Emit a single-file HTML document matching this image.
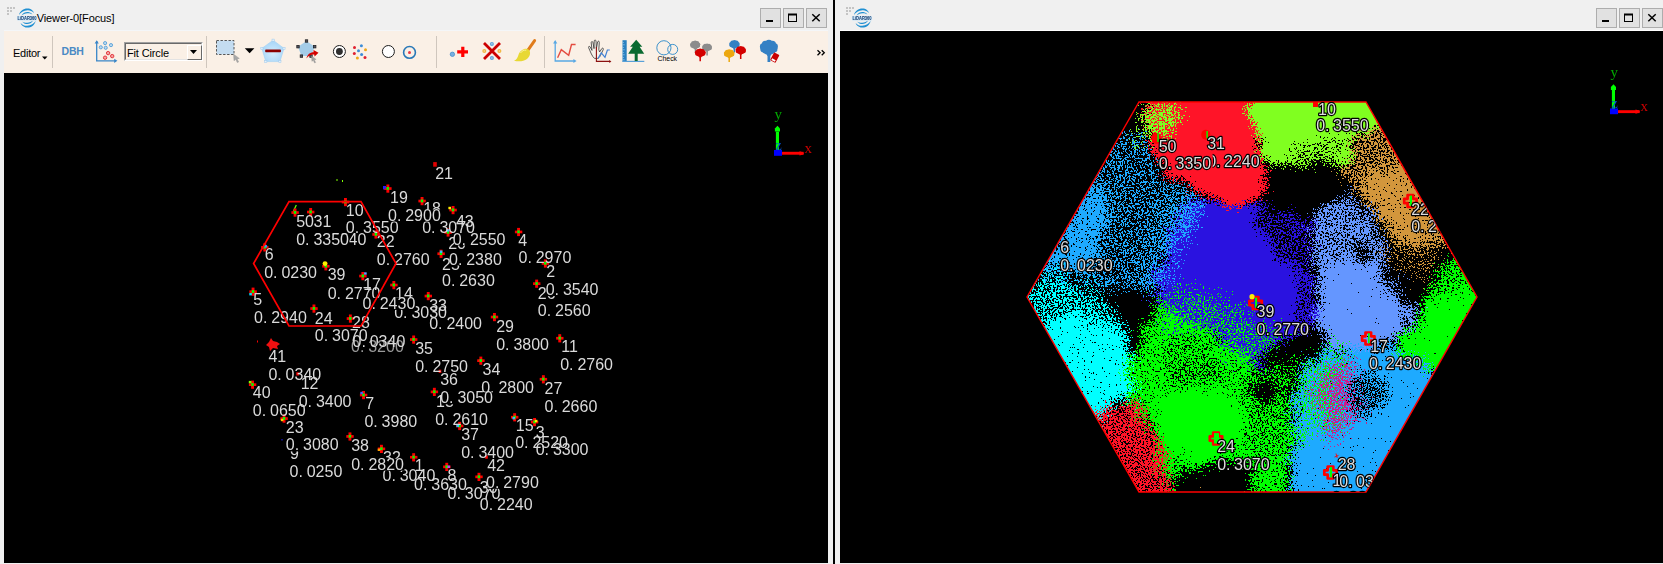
<!DOCTYPE html>
<html><head><meta charset="utf-8"><title>Viewer</title>
<style>
html,body{margin:0;padding:0}
body{width:1663px;height:564px;overflow:hidden;background:#f0f0f0;position:relative;font-family:"Liberation Sans",sans-serif}
.abs{position:absolute}
.btn{position:absolute;top:8px;width:19px;height:18px;background:#e1e1e1;border:1px solid #adadad}
.sep{position:absolute;top:36px;width:1px;height:32px;background:#cfc6bd}
svg{display:block;position:absolute;left:0;top:0;will-change:transform}
</style></head><body>
<div class="abs" style="left:4px;top:30px;width:824px;height:1px;background:#f4f6f8"></div>
<div class="abs" style="left:4px;top:31px;width:824px;height:42px;background:#faf0e6"></div>
<div class="abs" style="left:4px;top:73px;width:824px;height:490px;background:#000"></div>
<div class="abs" style="left:833px;top:0;width:2px;height:564px;background:#000"></div>
<div class="abs" style="left:840px;top:30px;width:823px;height:1px;background:#fff"></div>
<div class="abs" style="left:840px;top:31px;width:823px;height:532px;background:#000"></div>
<div class="abs" style="left:36.7px;top:11px;font-size:11px;line-height:14px;color:#000;letter-spacing:-0.1px;white-space:nowrap">Viewer-0[Focus]</div>
<div class="btn" style="left:760px"></div>
<div class="btn" style="left:783px"></div>
<div class="btn" style="left:806px"></div>
<div class="btn" style="left:1596px"></div>
<div class="btn" style="left:1619px"></div>
<div class="btn" style="left:1642px"></div>
<div class="abs" style="left:13px;top:47px;font-size:11px;line-height:13px;color:#000;letter-spacing:-0.25px">Editor</div>
<div class="abs" style="left:61.5px;top:44.5px;font-size:10.5px;line-height:13px;font-weight:bold;color:#4a8ac4;letter-spacing:-0.2px">DBH</div>
<div class="sep" style="left:52px"></div>
<div class="sep" style="left:206px"></div>
<div class="sep" style="left:436px"></div>
<div class="sep" style="left:544px"></div>
<div class="abs" style="left:124px;top:42px;width:79px;height:19px;box-sizing:border-box;border:1px solid;border-color:#a0a0a0 #fff #fff #a0a0a0;background:#faf0e6"><div style="position:absolute;left:0;top:0;right:0;bottom:0;border:1px solid;border-color:#696969 #e3e3e3 #e3e3e3 #696969"></div><div style="position:absolute;left:2px;top:3.5px;font-size:11px;line-height:13px;letter-spacing:-0.15px;color:#000;white-space:nowrap">Fit Circle</div><div style="position:absolute;left:62px;top:2px;width:15px;height:15px;box-sizing:border-box;background:#faf0e6;border:1px solid;border-color:#fff #696969 #696969 #fff"></div></div>
<div class="abs" style="left:657.5px;top:54.8px;font-size:6.9px;line-height:8px;color:#000;white-space:nowrap">Check</div>
<svg width="1663" height="564" viewBox="0 0 1663 564" style="pointer-events:none"><rect x="7" y="7" width="2" height="2" fill="#c4c4c4"/><rect x="10" y="7" width="2" height="2" fill="#c4c4c4"/><rect x="13" y="7" width="2" height="2" fill="#c4c4c4"/><rect x="7" y="10" width="2" height="2" fill="#c4c4c4"/><rect x="10" y="10" width="2" height="2" fill="#c4c4c4"/><rect x="7" y="13" width="2" height="2" fill="#c4c4c4"/><rect x="846" y="7" width="2" height="2" fill="#c4c4c4"/><rect x="849" y="7" width="2" height="2" fill="#c4c4c4"/><rect x="852" y="7" width="2" height="2" fill="#c4c4c4"/><rect x="846" y="10" width="2" height="2" fill="#c4c4c4"/><rect x="849" y="10" width="2" height="2" fill="#c4c4c4"/><rect x="846" y="13" width="2" height="2" fill="#c4c4c4"/><g fill="#2090d2" transform="translate(27 18)"><path d="M-8 -3 C-7 -8 -2 -10.4 2 -9.4 C5 -8.6 6.6 -6.6 7 -5 C5 -7.2 2.6 -8 0.4 -7.8 C-3.4 -7.4 -6.4 -5.6 -8 -3 z"/><path d="M-5.6 -2.6 C-4 -5.4 -1 -6.4 1.4 -6 C3.4 -5.6 4.8 -4.6 5.4 -3.4 C3.6 -4.6 2 -5 0.4 -4.8 C-2 -4.6 -4 -3.8 -5.6 -2.6 z"/><path d="M8.6 3 C7.6 8 2.6 10.4 -1.4 9.4 C-4.4 8.6 -6 6.6 -6.4 5 C-4.4 7.2 -2 8 0.2 7.8 C4 7.4 7 5.6 8.6 3 z"/><path d="M6.2 2.6 C4.6 5.4 1.6 6.4 -0.8 6 C-2.8 5.6 -4.2 4.6 -4.8 3.4 C-3 4.6 -1.4 5 0.2 4.8 C2.6 4.6 4.6 3.8 6.2 2.6 z"/></g><rect x="17" y="15.9" width="20" height="4.5" rx="1" fill="#c4e2f6"/><text x="17.5" y="19.9" font-family="Liberation Sans,sans-serif" font-weight="bold" font-size="4.6" fill="#1c3c6c" textLength="19" lengthAdjust="spacingAndGlyphs">LiDAR360</text><g fill="#2090d2" transform="translate(862 18)"><path d="M-8 -3 C-7 -8 -2 -10.4 2 -9.4 C5 -8.6 6.6 -6.6 7 -5 C5 -7.2 2.6 -8 0.4 -7.8 C-3.4 -7.4 -6.4 -5.6 -8 -3 z"/><path d="M-5.6 -2.6 C-4 -5.4 -1 -6.4 1.4 -6 C3.4 -5.6 4.8 -4.6 5.4 -3.4 C3.6 -4.6 2 -5 0.4 -4.8 C-2 -4.6 -4 -3.8 -5.6 -2.6 z"/><path d="M8.6 3 C7.6 8 2.6 10.4 -1.4 9.4 C-4.4 8.6 -6 6.6 -6.4 5 C-4.4 7.2 -2 8 0.2 7.8 C4 7.4 7 5.6 8.6 3 z"/><path d="M6.2 2.6 C4.6 5.4 1.6 6.4 -0.8 6 C-2.8 5.6 -4.2 4.6 -4.8 3.4 C-3 4.6 -1.4 5 0.2 4.8 C2.6 4.6 4.6 3.8 6.2 2.6 z"/></g><rect x="852" y="15.9" width="20" height="4.5" rx="1" fill="#c4e2f6"/><text x="852.5" y="19.9" font-family="Liberation Sans,sans-serif" font-weight="bold" font-size="4.6" fill="#1c3c6c" textLength="19" lengthAdjust="spacingAndGlyphs">LiDAR360</text><rect x="766" y="20" width="7" height="2" fill="#000"/><rect x="788.5" y="14.5" width="8" height="7" fill="none" stroke="#000" stroke-width="1"/><rect x="788" y="13.5" width="9" height="2" fill="#000"/><path d="M812.3 14.2 l7.4 7 M819.7 14.2 l-7.4 7" stroke="#000" stroke-width="1.5" fill="none"/><rect x="1602" y="20" width="7" height="2" fill="#000"/><rect x="1624.5" y="14.5" width="8" height="7" fill="none" stroke="#000" stroke-width="1"/><rect x="1624" y="13.5" width="9" height="2" fill="#000"/><path d="M1648.3 14.2 l7.4 7 M1655.7 14.2 l-7.4 7" stroke="#000" stroke-width="1.5" fill="none"/><path d="M42 56.5 h5.5 l-2.75 3 z" fill="#000"/><g fill="none" stroke="#3a86c8" stroke-width="1.3"><path d="M96.7 41 V60.8 H116"/></g><path d="M94.6 43.6 L96.7 40.2 L98.8 43.6 z M114.2 58.7 L117.4 60.8 L114.2 62.9 z" fill="#3a86c8"/><circle cx="105.1" cy="43.1" r="1.6" fill="#b8d8f0" stroke="#4a98d4" stroke-width="0.8"/><circle cx="111" cy="45.1" r="1.6" fill="#b8d8f0" stroke="#4a98d4" stroke-width="0.8"/><circle cx="100.8" cy="47.3" r="1.6" fill="#b8d8f0" stroke="#4a98d4" stroke-width="0.8"/><circle cx="105.7" cy="47.8" r="1.6" fill="#b8d8f0" stroke="#4a98d4" stroke-width="0.8"/><circle cx="108.1" cy="53.1" r="1.7" fill="#f4a0a0" stroke="#e02830" stroke-width="0.9"/><circle cx="112.2" cy="56.1" r="1.7" fill="#f4a0a0" stroke="#e02830" stroke-width="0.9"/><circle cx="105.1" cy="57.7" r="1.7" fill="#f4a0a0" stroke="#e02830" stroke-width="0.9"/><path d="M190 50 h7 l-3.5 4 z" fill="#000"/><rect x="216.5" y="40.5" width="17.5" height="14" fill="#c4dcf0" stroke="#555" stroke-width="1" stroke-dasharray="2.4 1.6"/><path d="M233.6 54.2 l0.4 6.6 l1.7 -1.6 l1.6 3.4 l1.3 -0.6 l-1.6 -3.3 l2.3 -0.3 z" fill="#a8a8a8" stroke="#8a8a8a" stroke-width="0.4"/><path d="M244.8 48.2 h9.6 l-4.8 5 z" fill="#000"/><defs><radialGradient id="pg" cx="0.5" cy="0.6" r="0.6"><stop offset="0" stop-color="#d4ecfc"/><stop offset="1" stop-color="#a4d4f8"/></radialGradient></defs><polygon points="273.1,40.2 284,48.4 279.9,61.6 265.8,61.6 261.9,48.4" fill="url(#pg)" stroke="#a0d0f4" stroke-width="0.6"/><rect x="272.0" y="39.1" width="2.2" height="2.2" fill="#e4f0fa" stroke="#9cc8ec" stroke-width="0.5"/><rect x="282.9" y="47.3" width="2.2" height="2.2" fill="#e4f0fa" stroke="#9cc8ec" stroke-width="0.5"/><rect x="278.79999999999995" y="60.5" width="2.2" height="2.2" fill="#e4f0fa" stroke="#9cc8ec" stroke-width="0.5"/><rect x="264.7" y="60.5" width="2.2" height="2.2" fill="#e4f0fa" stroke="#9cc8ec" stroke-width="0.5"/><rect x="260.79999999999995" y="47.3" width="2.2" height="2.2" fill="#e4f0fa" stroke="#9cc8ec" stroke-width="0.5"/><rect x="265.2" y="49.4" width="15.7" height="2.8" rx="0.6" fill="#8b0000"/><polygon points="306.5,41 314.7,46.7 311,56.1 301.4,56.1 298,46.7" fill="#a4cce8"/><rect x="305.3" y="39.8" width="2.4" height="2.4" fill="#556" stroke="#222" stroke-width="0.8"/><rect x="313.5" y="45.5" width="2.4" height="2.4" fill="#556" stroke="#222" stroke-width="0.8"/><rect x="309.8" y="54.9" width="2.4" height="2.4" fill="#556" stroke="#222" stroke-width="0.8"/><rect x="300.2" y="54.9" width="2.4" height="2.4" fill="#556" stroke="#222" stroke-width="0.8"/><rect x="296.8" y="45.5" width="2.4" height="2.4" fill="#556" stroke="#222" stroke-width="0.8"/><path d="M306.4 58.4 C307.5 54.5 310 52.3 313.5 52.3 L313.5 50 L318.5 52.8 L314.6 56.6 L314.2 54.6 C311 54.4 308.5 55.6 306.4 58.4 z" fill="#d40000"/><path d="M311.4 55.8 l0.5 5.6 l1.3 -1.2 l1.4 2.8 l1.1 -0.5 l-1.4 -2.8 l1.9 -0.3 z" fill="#a0a0a0" stroke="#888" stroke-width="0.3"/><circle cx="339.4" cy="51.5" r="6" fill="#fff" stroke="#1c1c1c" stroke-width="1"/><circle cx="339.4" cy="51.5" r="3.4" fill="#2e2e2e"/><circle cx="354.5" cy="47.5" r="1.5" fill="#e02030"/><circle cx="361.4" cy="45.7" r="1.5" fill="#3c8cd8"/><circle cx="365.5" cy="49.7" r="1.5" fill="#f0a818"/><circle cx="358.5" cy="50.8" r="1.5" fill="#3c8cd8"/><circle cx="354.3" cy="53.4" r="1.5" fill="#e02030"/><circle cx="361.6" cy="54.5" r="1.5" fill="#3c8cd8"/><circle cx="357.4" cy="57.9" r="1.5" fill="#f0a818"/><circle cx="365" cy="57.6" r="1.5" fill="#e02030"/><circle cx="388.4" cy="51.5" r="6" fill="#fff" stroke="#1c1c1c" stroke-width="1"/><circle cx="409.5" cy="52.4" r="5.9" fill="none" stroke="#2878b8" stroke-width="1.6"/><circle cx="409.5" cy="52.4" r="1.5" fill="#e83848"/><circle cx="452.4" cy="54.3" r="2.2" fill="#78b0e0" stroke="#3c88c8" stroke-width="0.7"/><path d="M457.2 50.2 h4 v-3.5 h3.2 v3.5 h3.6 v3.2 h-3.6 v3.6 h-3.2 v-3.6 h-4 z" fill="#ff0000"/><circle cx="491.9" cy="43.9" r="2" fill="#4c98d8" opacity="0.9"/><circle cx="491.9" cy="43.9" r="0.8" fill="#faf0e6" opacity="0.6"/><circle cx="491.9" cy="58.1" r="2" fill="#4c98d8" opacity="0.9"/><circle cx="491.9" cy="58.1" r="0.8" fill="#faf0e6" opacity="0.6"/><circle cx="484.3" cy="51" r="2" fill="#f0b030" opacity="0.9"/><circle cx="484.3" cy="51" r="0.8" fill="#faf0e6" opacity="0.6"/><circle cx="499.4" cy="51" r="2" fill="#f0b030" opacity="0.9"/><circle cx="499.4" cy="51" r="0.8" fill="#faf0e6" opacity="0.6"/><path d="M484 43 L500 59 M500 43 L484 59" stroke="#cc0000" stroke-width="2.8" fill="none"/><path d="M534.6 40.6 L527.6 50.6" stroke="#e07c1c" stroke-width="3" stroke-linecap="round" fill="none"/><path d="M528.5 49.5 C531 51.5 530.5 56 527 59 C523.5 61.8 518 61.6 514 60.8 C517 59.6 517.6 57 518.6 54.4 C520 50.6 525 47.4 528.5 49.5 z" fill="#e8d834"/><path d="M520.5 53 C521.8 50.8 524.2 49.8 526.2 50.2" stroke="#fbf4a8" stroke-width="0.9" fill="none"/><g fill="none" stroke="#58a8e4" stroke-width="1.3"><path d="M555.2 41.5 V61 H575"/></g><path d="M553.1 43.4 L555.2 40 L557.3 43.4 z M573.4 58.9 L576.6 61 L573.4 63.1 z" fill="#58a8e4"/><path d="M557.6 57.7 L561.3 49.6 L568.7 55.3 L571.5 44.5 L575.6 44.5" stroke="#e44c40" stroke-width="1.4" fill="none"/><path d="M594.5 58.4 C592 56.5 590.6 52 588.6 47.6 C588.2 46.2 589.6 45.8 590.2 47 L592 50.4 L591.2 42.6 C591.2 41.2 592.8 41.2 593 42.6 L594 48.6 L594.2 41 C594.3 39.7 595.9 39.7 596 41 L596.4 48.4 L597.6 42 C597.9 40.7 599.4 41 599.3 42.3 L598.8 49.6 L599.6 52 L601.8 48.6 C602.6 47.6 603.8 48.4 603.3 49.5 L600.4 55.6 C599.8 57 598.8 58 597.6 58.4 z" fill="#f6f2ea" stroke="#333" stroke-width="0.8" stroke-linejoin="round"/><path d="M596.4 47 V61.4 H610" stroke="#8b1010" stroke-width="1.1" fill="none"/><path d="M609.3 59.9 L611.4 61.4 L609.3 62.9 z" fill="#8b1010"/><path d="M598 58.5 L601.3 52.8 L605 57.3 L607.4 50 L609.8 50" stroke="#4080d4" stroke-width="1.2" fill="none"/><rect x="622.5" y="40.2" width="4.2" height="21.6" fill="#2a80c0"/><rect x="622.5" y="42.0" width="1.4" height="0.7" fill="#9cc8ec"/><rect x="622.5" y="44.5" width="2.2" height="0.7" fill="#9cc8ec"/><rect x="622.5" y="47.0" width="1.4" height="0.7" fill="#9cc8ec"/><rect x="622.5" y="49.5" width="2.2" height="0.7" fill="#9cc8ec"/><rect x="622.5" y="52.0" width="1.4" height="0.7" fill="#9cc8ec"/><rect x="622.5" y="54.5" width="2.2" height="0.7" fill="#9cc8ec"/><rect x="622.5" y="57.0" width="1.4" height="0.7" fill="#9cc8ec"/><rect x="622.5" y="59.5" width="2.2" height="0.7" fill="#9cc8ec"/><rect x="622.5" y="60.8" width="21.8" height="1.2" fill="#58a0d8"/><path d="M636.2 39.8 L642.3 46.7 L639.6 46.7 L644.2 53.7 L637.7 53.7 L637.7 61 L634.7 61 L634.7 53.7 L628.2 53.7 L632.8 46.7 L630.1 46.7 z" fill="#0a6a30"/><circle cx="663.9" cy="47.8" r="7.1" fill="none" stroke="#2888c8" stroke-width="0.9"/><circle cx="672.7" cy="49.4" r="5" fill="none" stroke="#2888c8" stroke-width="0.9"/><g fill="#8c8c8c"><ellipse cx="695.20" cy="45.34" rx="4.69" ry="3.56"/><circle cx="691.94" cy="44.32" r="1.84"/><circle cx="693.21" cy="43.12" r="2.02"/><circle cx="695.20" cy="42.66" r="2.11"/><circle cx="697.19" cy="43.12" r="2.02"/><circle cx="698.46" cy="44.32" r="1.84"/><circle cx="698.46" cy="46.03" r="1.56"/><circle cx="691.94" cy="46.03" r="1.56"/><path d="M693.46 47.44 L697.54 47.44 L696.25 49.87 L696.25 52.4 L694.75 52.4 L694.75 49.87 z"/></g><g fill="#8c8c8c"><ellipse cx="707.05" cy="47.78" rx="4.55" ry="3.12"/><circle cx="703.89" cy="46.88" r="1.78"/><circle cx="705.12" cy="45.83" r="1.96"/><circle cx="707.05" cy="45.43" r="2.05"/><circle cx="708.98" cy="45.83" r="1.96"/><circle cx="710.21" cy="46.88" r="1.78"/><circle cx="710.21" cy="48.39" r="1.51"/><circle cx="703.89" cy="48.39" r="1.51"/><path d="M705.12 49.62 L709.08 49.62 L707.85 51.75 L707.85 55.5 L706.35 55.5 L706.35 51.75 z"/></g><g fill="#d40000"><ellipse cx="700.30" cy="53.27" rx="4.97" ry="3.43"/><circle cx="696.85" cy="52.28" r="1.94"/><circle cx="698.19" cy="51.13" r="2.14"/><circle cx="700.30" cy="50.69" r="2.24"/><circle cx="702.41" cy="51.13" r="2.14"/><circle cx="703.75" cy="52.28" r="1.94"/><circle cx="703.75" cy="53.94" r="1.65"/><circle cx="696.85" cy="53.94" r="1.65"/><path d="M698.04 55.30 L702.36 55.30 L700.95 57.64 L700.95 61.3 L699.45 61.3 L699.45 57.64 z"/></g><g fill="#3480c4"><ellipse cx="734.45" cy="44.81" rx="4.83" ry="3.39"/><circle cx="731.10" cy="43.84" r="1.89"/><circle cx="732.40" cy="42.70" r="2.08"/><circle cx="734.45" cy="42.27" r="2.17"/><circle cx="736.50" cy="42.70" r="2.08"/><circle cx="737.80" cy="43.84" r="1.89"/><circle cx="737.80" cy="45.47" r="1.61"/><circle cx="731.10" cy="45.47" r="1.61"/><path d="M732.20 46.81 L736.40 46.81 L735.05 49.12 L735.05 52.6 L733.55 52.6 L733.55 49.12 z"/></g><g fill="#d40000"><ellipse cx="740.75" cy="50.81" rx="4.83" ry="3.39"/><circle cx="737.40" cy="49.84" r="1.89"/><circle cx="738.70" cy="48.70" r="2.08"/><circle cx="740.75" cy="48.27" r="2.17"/><circle cx="742.80" cy="48.70" r="2.08"/><circle cx="744.10" cy="49.84" r="1.89"/><circle cx="744.10" cy="51.47" r="1.61"/><circle cx="737.40" cy="51.47" r="1.61"/><path d="M738.60 52.81 L742.80 52.81 L741.45 55.12 L741.45 58.9 L739.95 58.9 L739.95 55.12 z"/></g><g fill="#eca810"><ellipse cx="729.20" cy="54.06" rx="4.97" ry="3.34"/><circle cx="725.75" cy="53.10" r="1.94"/><circle cx="727.09" cy="51.97" r="2.14"/><circle cx="729.20" cy="51.55" r="2.24"/><circle cx="731.31" cy="51.97" r="2.14"/><circle cx="732.65" cy="53.10" r="1.94"/><circle cx="732.65" cy="54.71" r="1.65"/><circle cx="725.75" cy="54.71" r="1.65"/><path d="M727.04 56.03 L731.36 56.03 L729.95 58.31 L729.95 61.9 L728.45 61.9 L728.45 58.31 z"/></g><g fill="#3480c4"><ellipse cx="768.90" cy="48.26" rx="8.28" ry="6.34"/><circle cx="763.15" cy="46.45" r="3.24"/><circle cx="765.39" cy="44.32" r="3.56"/><circle cx="768.90" cy="43.51" r="3.73"/><circle cx="772.41" cy="44.32" r="3.56"/><circle cx="774.65" cy="46.45" r="3.24"/><circle cx="774.65" cy="49.50" r="2.75"/><circle cx="763.15" cy="49.50" r="2.75"/><path d="M765.30 52.01 L772.50 52.01 L770.30 56.33 L770.30 61.9 L767.50 61.9 L767.50 56.33 z"/></g><g transform="translate(774.8 57.6) rotate(28)"><rect x="-3" y="-4.4" width="6" height="8.8" rx="0.8" fill="#c80000"/><rect x="-2" y="1.8" width="4" height="1.9" fill="#fff"/></g><path d="M817.5 50.3 l2.6 2.5 l-2.6 2.5 M821.7 50.3 l2.6 2.5 l-2.6 2.5" stroke="#000" stroke-width="1.3" fill="none"/></svg>
<svg width="1663" height="564" viewBox="0 0 1663 564" style="pointer-events:none"><clipPath id="lc"><rect x="4" y="73" width="824" height="490"/></clipPath><g clip-path="url(#lc)"><rect x="336" y="179.5" width="2" height="1" fill="#80ff00"/><rect x="342" y="180" width="1" height="2" fill="#80ff00"/><path d="M293.5 211 l2.8 -6" stroke="#60ff00" stroke-width="1.3" fill="none"/><rect x="383" y="186" width="3" height="3.5" fill="#2020ff"/><path d="M266 345 l3 -3 l2 -4 l2 3 l4 1 l3 2 l-3 2 l1 3 l-5 -1 l-3 3 l-1 -4 z" fill="#f01010"/><rect x="257" y="340.5" width="1" height="2" fill="#f00"/><rect x="281.5" y="439" width="1" height="1.5" fill="#2020ff"/><rect x="289" y="444" width="1" height="1" fill="#2020ff"/><rect x="308" y="446" width="1.5" height="1.5" fill="#2020ff"/><rect x="433.2" y="162.1" width="3.6" height="4.6" fill="#e00000"/><rect x="384.2" y="187.2" width="7.4" height="2.7" fill="#f00"/><rect x="386.4" y="184.5" width="2.9" height="8.2" fill="#f00"/><rect x="386.6" y="187.0" width="2.4" height="2.8" fill="#0f0"/><rect x="383.2" y="186.3" width="2.6" height="2.4" fill="#2020ff"/><rect x="418.4" y="199.7" width="7.4" height="2.7" fill="#f00"/><rect x="420.6" y="197.0" width="2.9" height="8.2" fill="#f00"/><rect x="420.8" y="199.5" width="2.4" height="2.8" fill="#0f0"/><rect x="449.4" y="208.7" width="7.4" height="2.7" fill="#f00"/><rect x="451.6" y="206.0" width="2.9" height="8.2" fill="#f00"/><rect x="451.8" y="208.5" width="2.4" height="2.8" fill="#0f0"/><rect x="448.4" y="206.8" width="2.6" height="2.4" fill="#ffee00"/><rect x="341.8" y="200.7" width="7.4" height="2.7" fill="#f00"/><rect x="344.0" y="198.0" width="2.9" height="8.2" fill="#f00"/><rect x="344.2" y="200.5" width="2.4" height="2.8" fill="#0f0"/><rect x="291.4" y="211.2" width="7.4" height="2.7" fill="#f00"/><rect x="293.6" y="208.5" width="2.9" height="8.2" fill="#f00"/><rect x="293.8" y="211.0" width="2.4" height="2.8" fill="#0f0"/><rect x="307.0" y="210.7" width="7.4" height="2.7" fill="#f00"/><rect x="309.2" y="208.0" width="2.9" height="8.2" fill="#f00"/><rect x="309.4" y="210.5" width="2.4" height="2.8" fill="#0f0"/><rect x="372.3" y="233.1" width="7.4" height="2.7" fill="#f00"/><rect x="374.5" y="230.4" width="2.9" height="8.2" fill="#f00"/><rect x="374.7" y="232.9" width="2.4" height="2.8" fill="#0f0"/><rect x="444.4" y="231.1" width="7.4" height="2.7" fill="#f00"/><rect x="446.6" y="228.4" width="2.9" height="8.2" fill="#f00"/><rect x="446.8" y="230.9" width="2.4" height="2.8" fill="#0f0"/><rect x="446.8" y="229.2" width="2.6" height="2.4" fill="#30c0ff"/><rect x="437.4" y="252.4" width="7.4" height="2.7" fill="#f00"/><rect x="439.6" y="249.7" width="2.9" height="8.2" fill="#f00"/><rect x="439.8" y="252.2" width="2.4" height="2.8" fill="#0f0"/><rect x="439.8" y="250.5" width="2.6" height="2.4" fill="#30c0ff"/><rect x="514.9" y="230.6" width="7.4" height="2.7" fill="#f00"/><rect x="517.1" y="227.9" width="2.9" height="8.2" fill="#f00"/><rect x="517.3" y="230.4" width="2.4" height="2.8" fill="#0f0"/><rect x="541.7" y="262.1" width="7.4" height="2.7" fill="#f00"/><rect x="543.9" y="259.4" width="2.9" height="8.2" fill="#f00"/><rect x="544.1" y="261.9" width="2.4" height="2.8" fill="#0f0"/><rect x="533.0" y="282.3" width="7.4" height="2.7" fill="#f00"/><rect x="535.2" y="279.6" width="2.9" height="8.2" fill="#f00"/><rect x="535.4" y="282.1" width="2.4" height="2.8" fill="#0f0"/><rect x="261.1" y="246.0" width="7.4" height="2.7" fill="#f00"/><rect x="263.3" y="243.3" width="2.9" height="8.2" fill="#f00"/><rect x="263.5" y="245.8" width="2.4" height="2.8" fill="#0f0"/><rect x="264.5" y="245.1" width="2.6" height="2.4" fill="#30a0ff"/><rect x="322.2" y="264.9" width="7.4" height="2.7" fill="#f00"/><rect x="324.4" y="262.2" width="2.9" height="8.2" fill="#f00"/><rect x="324.6" y="264.7" width="2.4" height="2.8" fill="#0f0"/><rect x="359.2" y="274.7" width="7.4" height="2.7" fill="#f00"/><rect x="361.4" y="272.0" width="2.9" height="8.2" fill="#f00"/><rect x="361.6" y="274.5" width="2.4" height="2.8" fill="#0f0"/><rect x="364.1" y="272.3" width="2.6" height="2.4" fill="#60a0ff"/><rect x="390.2" y="283.7" width="7.4" height="2.7" fill="#f00"/><rect x="392.4" y="281.0" width="2.9" height="8.2" fill="#f00"/><rect x="392.6" y="283.5" width="2.4" height="2.8" fill="#0f0"/><rect x="424.6" y="294.7" width="7.4" height="2.7" fill="#f00"/><rect x="426.8" y="292.0" width="2.9" height="8.2" fill="#f00"/><rect x="427.0" y="294.5" width="2.4" height="2.8" fill="#0f0"/><rect x="249.4" y="290.3" width="7.4" height="2.7" fill="#f00"/><rect x="251.6" y="287.6" width="2.9" height="8.2" fill="#f00"/><rect x="251.8" y="290.1" width="2.4" height="2.8" fill="#0f0"/><rect x="249.3" y="293.0" width="2.6" height="2.4" fill="#00e0ff"/><rect x="310.3" y="307.2" width="7.4" height="2.7" fill="#f00"/><rect x="312.5" y="304.5" width="2.9" height="8.2" fill="#f00"/><rect x="312.7" y="307.0" width="2.4" height="2.8" fill="#0f0"/><rect x="346.7" y="317.2" width="7.4" height="2.7" fill="#f00"/><rect x="348.9" y="314.5" width="2.9" height="8.2" fill="#f00"/><rect x="349.1" y="317.0" width="2.4" height="2.8" fill="#0f0"/><rect x="490.8" y="315.7" width="7.4" height="2.7" fill="#f00"/><rect x="493.0" y="313.0" width="2.9" height="8.2" fill="#f00"/><rect x="493.2" y="315.5" width="2.4" height="2.8" fill="#0f0"/><rect x="556.1" y="336.9" width="7.4" height="2.7" fill="#f00"/><rect x="558.3" y="334.2" width="2.9" height="8.2" fill="#f00"/><rect x="558.5" y="336.7" width="2.4" height="2.8" fill="#0f0"/><rect x="410.0" y="338.2" width="7.4" height="2.7" fill="#f00"/><rect x="412.2" y="335.5" width="2.9" height="8.2" fill="#f00"/><rect x="412.4" y="338.0" width="2.4" height="2.8" fill="#0f0"/><rect x="477.2" y="359.3" width="7.4" height="2.7" fill="#f00"/><rect x="479.4" y="356.6" width="2.9" height="8.2" fill="#f00"/><rect x="479.6" y="359.1" width="2.4" height="2.8" fill="#0f0"/><rect x="438.7" y="369.7" width="2.6" height="3.2" fill="#f00"/><rect x="539.7" y="377.9" width="7.4" height="2.7" fill="#f00"/><rect x="541.9" y="375.2" width="2.9" height="8.2" fill="#f00"/><rect x="542.1" y="377.7" width="2.4" height="2.8" fill="#0f0"/><rect x="430.7" y="390.5" width="7.4" height="2.7" fill="#f00"/><rect x="432.9" y="387.8" width="2.9" height="8.2" fill="#f00"/><rect x="433.1" y="390.3" width="2.4" height="2.8" fill="#0f0"/><rect x="296.3" y="372.3" width="2.6" height="3.2" fill="#f00"/><rect x="248.9" y="383.3" width="7.4" height="2.7" fill="#f00"/><rect x="251.1" y="380.6" width="2.9" height="8.2" fill="#f00"/><rect x="251.3" y="383.1" width="2.4" height="2.8" fill="#0f0"/><rect x="248.8" y="380.9" width="2.6" height="2.4" fill="#80ff00"/><rect x="359.9" y="393.7" width="7.4" height="2.7" fill="#f00"/><rect x="362.1" y="391.0" width="2.9" height="8.2" fill="#f00"/><rect x="362.3" y="393.5" width="2.4" height="2.8" fill="#0f0"/><rect x="360.3" y="391.8" width="2.6" height="2.4" fill="#4060ff"/><rect x="280.4" y="417.2" width="7.4" height="2.7" fill="#f00"/><rect x="282.6" y="414.5" width="2.9" height="8.2" fill="#f00"/><rect x="282.8" y="417.0" width="2.4" height="2.8" fill="#0f0"/><rect x="280.8" y="418.8" width="2.6" height="2.4" fill="#ffcc00"/><rect x="346.3" y="435.1" width="7.4" height="2.7" fill="#f00"/><rect x="348.5" y="432.4" width="2.9" height="8.2" fill="#f00"/><rect x="348.7" y="434.9" width="2.4" height="2.8" fill="#0f0"/><rect x="377.8" y="447.5" width="7.4" height="2.7" fill="#f00"/><rect x="380.0" y="444.8" width="2.9" height="8.2" fill="#f00"/><rect x="380.2" y="447.3" width="2.4" height="2.8" fill="#0f0"/><rect x="377.7" y="448.6" width="2.6" height="2.4" fill="#ffa000"/><rect x="410.0" y="455.9" width="7.4" height="2.7" fill="#f00"/><rect x="412.2" y="453.2" width="2.9" height="8.2" fill="#f00"/><rect x="412.4" y="455.7" width="2.4" height="2.8" fill="#0f0"/><rect x="456.0" y="424.6" width="7.4" height="2.7" fill="#f00"/><rect x="458.2" y="421.9" width="2.9" height="8.2" fill="#f00"/><rect x="458.4" y="424.4" width="2.4" height="2.8" fill="#0f0"/><rect x="456.4" y="424.7" width="2.6" height="2.4" fill="#30c0ff"/><rect x="511.0" y="415.9" width="7.4" height="2.7" fill="#f00"/><rect x="513.2" y="413.2" width="2.9" height="8.2" fill="#f00"/><rect x="513.4" y="415.7" width="2.4" height="2.8" fill="#0f0"/><rect x="512.4" y="417.0" width="2.6" height="2.4" fill="#30c0ff"/><rect x="530.9" y="420.7" width="7.4" height="2.7" fill="#f00"/><rect x="533.1" y="418.0" width="2.9" height="8.2" fill="#f00"/><rect x="533.3" y="420.5" width="2.4" height="2.8" fill="#0f0"/><rect x="534.8" y="419.8" width="2.6" height="2.4" fill="#ffee00"/><rect x="485.2" y="455.5" width="2.6" height="3.2" fill="#f00"/><rect x="443.1" y="465.5" width="7.4" height="2.7" fill="#f00"/><rect x="445.3" y="462.8" width="2.9" height="8.2" fill="#f00"/><rect x="445.5" y="465.3" width="2.4" height="2.8" fill="#0f0"/><rect x="447.5" y="465.6" width="2.6" height="2.4" fill="#c040ff"/><rect x="475.3" y="475.5" width="7.4" height="2.7" fill="#f00"/><rect x="477.5" y="472.8" width="2.9" height="8.2" fill="#f00"/><rect x="477.7" y="475.3" width="2.4" height="2.8" fill="#0f0"/><circle cx="325" cy="263.6" r="2.4" fill="#ffee00"/><g font-family="Liberation Sans,sans-serif" font-size="16" fill="#dadada" word-spacing="-0.6"><text x="351" y="352.3" fill="#9a9a9a">0. 3200</text><text x="435.2" y="178.9">21</text><text x="390.0" y="203.2">19</text><text x="423.2" y="214.1">18</text><text x="422.2" y="233.0">0. 3070</text><text x="455.9" y="226.5">43</text><text x="345.8" y="215.5">10</text><text x="345.8" y="233.0">0. 3550</text><text x="296.2" y="227.3">50</text><text x="313.6" y="227.3">31</text><text x="313.6" y="245.4">0. 2240</text><text x="376.8" y="247.1">22</text><text x="376.8" y="265.2">0. 2760</text><text x="448.2" y="248.5">20</text><text x="442.0" y="269.5">25</text><text x="442.0" y="285.8">0. 2630</text><text x="518.2" y="245.9">4</text><text x="518.5" y="263.2">0. 2970</text><text x="546.2" y="276.9">2</text><text x="537.8" y="298.9">26</text><text x="537.8" y="315.7">0. 2560</text><text x="264.7" y="260.3">6</text><text x="264.2" y="277.5">0. 0230</text><text x="327.7" y="280.1">39</text><text x="327.7" y="298.5">0. 2770</text><text x="363.2" y="289.5">17</text><text x="395.0" y="298.9">14</text><text x="394.2" y="317.5">0. 3030</text><text x="429.2" y="310.8">33</text><text x="429.2" y="329.1">0. 2400</text><text x="253.2" y="304.5">5</text><text x="254.0" y="322.5">0. 2940</text><text x="314.8" y="323.8">24</text><text x="314.8" y="340.6">0. 3070</text><text x="352.0" y="328.2">28</text><text x="352.5" y="346.5">0. 0340</text><text x="496.2" y="332.4">29</text><text x="496.2" y="349.7">0. 3800</text><text x="561.2" y="352.2">11</text><text x="560.2" y="369.5">0. 2760</text><text x="415.2" y="353.5">35</text><text x="415.2" y="372.3">0. 2750</text><text x="482.5" y="375.3">34</text><text x="481.2" y="392.7">0. 2800</text><text x="440.2" y="385.2">36</text><text x="544.5" y="393.7">27</text><text x="544.5" y="411.8">0. 2660</text><text x="436.0" y="406.8">13</text><text x="435.2" y="425.0">0. 2610</text><text x="268.4" y="362.2">41</text><text x="268.4" y="380.3">0. 0340</text><text x="300.7" y="389.0">12</text><text x="298.7" y="406.5">0. 3400</text><text x="252.8" y="398.2">40</text><text x="252.8" y="415.9">0. 0650</text><text x="365.2" y="408.5">7</text><text x="364.4" y="427.1">0. 3980</text><text x="285.8" y="432.5">23</text><text x="290.0" y="459.2">9</text><text x="289.5" y="477.2">0. 0250</text><text x="351.2" y="451.1">38</text><text x="383.0" y="463.0">32</text><text x="382.5" y="481.4">0. 3040</text><text x="414.8" y="471.0">1</text><text x="414.1" y="490.0">0. 3630</text><text x="461.2" y="439.9">37</text><text x="461.2" y="457.8">0. 3400</text><text x="515.8" y="430.7">15</text><text x="515.2" y="448.1">0. 2520</text><text x="535.7" y="437.5">3</text><text x="535.7" y="454.8">0. 3300</text><text x="487.2" y="470.9">42</text><text x="447.6" y="480.8">8</text><text x="447.6" y="498.7">0. 3070</text><text x="479.8" y="493.2">30</text><text x="479.8" y="510.1">0. 2240</text><rect x="389.3" y="209.5" width="52" height="12" fill="#000"/><text x="388.0" y="220.5">0. 2900</text><rect x="454.0" y="233.5" width="52" height="12" fill="#000"/><text x="452.7" y="244.5">0. 2550</text><rect x="297.5" y="234.4" width="52" height="12" fill="#000"/><text x="296.2" y="245.4">0. 3350</text><rect x="450.3" y="253.5" width="52" height="12" fill="#000"/><text x="449.0" y="264.5">0. 2380</text><rect x="547.0" y="284.1" width="52" height="12" fill="#000"/><text x="545.7" y="295.1">0. 3540</text><rect x="363.8" y="297.9" width="52" height="12" fill="#000"/><text x="362.5" y="308.9">0. 2430</text><rect x="441.5" y="392.3" width="52" height="12" fill="#000"/><text x="440.2" y="403.3">0. 3050</text><rect x="287.1" y="439.4" width="52" height="12" fill="#000"/><text x="285.8" y="450.4">0. 3080</text><rect x="352.5" y="458.7" width="52" height="12" fill="#000"/><text x="351.2" y="469.7">0. 2820</text><rect x="487.3" y="476.8" width="52" height="12" fill="#000"/><text x="486.0" y="487.8">0. 2790</text></g><polygon points="289,201.6 361,201.6 396,263.5 361,326 289,326 253.6,263.5" fill="none" stroke="#f00" stroke-width="1.7"/><rect x="775.9" y="131.6" width="3.1" height="19" fill="#0f0"/><path d="M774.9 131.6 h5.1 v-3 l-2.5 -2.8 l-2.6 2.8 z" fill="#0f0"/><rect x="781.0" y="151.8" width="22.5" height="2.9" fill="#f00"/><path d="M799.5 151.2 l4.2 1.2 v1.8 l-4.2 1.2 z" fill="#f00"/><text x="775.5" y="150.0" font-family="Liberation Serif,serif" font-size="14" fill="#0050d0">z</text><rect x="774.0" y="150.0" width="8" height="5.8" fill="#00f"/><text x="774.6" y="119.0" font-family="Liberation Serif,serif" font-size="15" fill="#00a800">y</text><text x="804.6" y="152.6" font-family="Liberation Serif,serif" font-size="15" fill="#c80000">x</text></g></svg>
<svg width="1663" height="564" viewBox="0 0 1663 564" style="pointer-events:none"><defs><clipPath id="hx"><polygon points="1139,102 1366,102 1477,297 1366,492 1139,492 1027,297"/></clipPath><clipPath id="c31"><rect x="1212.6" y="150" width="70" height="24"/></clipPath><filter id="rf0" filterUnits="userSpaceOnUse" x="970" y="50" width="560" height="500" color-interpolation-filters="sRGB"><feTurbulence type="fractalNoise" baseFrequency="0.04" numOctaves="3" seed="11" result="w"/><feDisplacementMap in="SourceAlpha" in2="w" scale="34" xChannelSelector="R" yChannelSelector="G" result="sd"/><feGaussianBlur in="sd" stdDeviation="4" result="b"/><feTurbulence type="fractalNoise" baseFrequency="0.6" numOctaves="2" seed="3" result="n"/><feComponentTransfer in="n" result="u"><feFuncA type="table" tableValues="0.000 0.000 0.000 0.001 0.004 0.016 0.051 0.115 0.211 0.332 0.499 0.667 0.797 0.885 0.949 0.984 0.997 0.999 1.000 1.000 1.000"/></feComponentTransfer><feComposite in="b" in2="u" operator="arithmetic" k1="0" k2="1.03" k3="-1" k4="0.49" result="c"/><feComponentTransfer in="c" result="t"><feFuncA type="discrete" tableValues="0 1"/></feComponentTransfer><feFlood flood-color="#2a12e0"/><feComposite in2="t" operator="in"/></filter><filter id="rf1" filterUnits="userSpaceOnUse" x="970" y="50" width="560" height="500" color-interpolation-filters="sRGB"><feTurbulence type="fractalNoise" baseFrequency="0.04" numOctaves="3" seed="16" result="w"/><feDisplacementMap in="SourceAlpha" in2="w" scale="34" xChannelSelector="R" yChannelSelector="G" result="sd"/><feGaussianBlur in="sd" stdDeviation="5" result="b"/><feTurbulence type="fractalNoise" baseFrequency="0.55" numOctaves="2" seed="10" result="n"/><feComponentTransfer in="n" result="u"><feFuncA type="table" tableValues="0.000 0.000 0.000 0.001 0.004 0.016 0.051 0.115 0.211 0.332 0.499 0.667 0.797 0.885 0.949 0.984 0.997 0.999 1.000 1.000 1.000"/></feComponentTransfer><feComposite in="b" in2="u" operator="arithmetic" k1="0" k2="1.03" k3="-1" k4="0.49" result="c"/><feComponentTransfer in="c" result="t"><feFuncA type="discrete" tableValues="0 1"/></feComponentTransfer><feFlood flood-color="#1eaaff"/><feComposite in2="t" operator="in"/></filter><filter id="rf2" filterUnits="userSpaceOnUse" x="970" y="50" width="560" height="500" color-interpolation-filters="sRGB"><feTurbulence type="fractalNoise" baseFrequency="0.04" numOctaves="3" seed="21" result="w"/><feDisplacementMap in="SourceAlpha" in2="w" scale="34" xChannelSelector="R" yChannelSelector="G" result="sd"/><feGaussianBlur in="sd" stdDeviation="7" result="b"/><feTurbulence type="fractalNoise" baseFrequency="0.65" numOctaves="2" seed="17" result="n"/><feComponentTransfer in="n" result="u"><feFuncA type="table" tableValues="0.000 0.000 0.000 0.001 0.004 0.016 0.051 0.115 0.211 0.332 0.499 0.667 0.797 0.885 0.949 0.984 0.997 0.999 1.000 1.000 1.000"/></feComponentTransfer><feComposite in="b" in2="u" operator="arithmetic" k1="0" k2="1.03" k3="-1" k4="0.49" result="c"/><feComponentTransfer in="c" result="t"><feFuncA type="discrete" tableValues="0 1"/></feComponentTransfer><feFlood flood-color="#1eaaff"/><feComposite in2="t" operator="in"/></filter><filter id="rf3" filterUnits="userSpaceOnUse" x="970" y="50" width="560" height="500" color-interpolation-filters="sRGB"><feTurbulence type="fractalNoise" baseFrequency="0.04" numOctaves="3" seed="26" result="w"/><feDisplacementMap in="SourceAlpha" in2="w" scale="34" xChannelSelector="R" yChannelSelector="G" result="sd"/><feGaussianBlur in="sd" stdDeviation="5" result="b"/><feTurbulence type="fractalNoise" baseFrequency="0.55" numOctaves="2" seed="24" result="n"/><feComponentTransfer in="n" result="u"><feFuncA type="table" tableValues="0.000 0.000 0.000 0.001 0.004 0.016 0.051 0.115 0.211 0.332 0.499 0.667 0.797 0.885 0.949 0.984 0.997 0.999 1.000 1.000 1.000"/></feComponentTransfer><feComposite in="b" in2="u" operator="arithmetic" k1="0" k2="1.03" k3="-1" k4="0.49" result="c"/><feComponentTransfer in="c" result="t"><feFuncA type="discrete" tableValues="0 1"/></feComponentTransfer><feFlood flood-color="#00ffff"/><feComposite in2="t" operator="in"/></filter><filter id="rf4" filterUnits="userSpaceOnUse" x="970" y="50" width="560" height="500" color-interpolation-filters="sRGB"><feTurbulence type="fractalNoise" baseFrequency="0.04" numOctaves="3" seed="31" result="w"/><feDisplacementMap in="SourceAlpha" in2="w" scale="34" xChannelSelector="R" yChannelSelector="G" result="sd"/><feGaussianBlur in="sd" stdDeviation="5" result="b"/><feTurbulence type="fractalNoise" baseFrequency="0.55" numOctaves="2" seed="31" result="n"/><feComponentTransfer in="n" result="u"><feFuncA type="table" tableValues="0.000 0.000 0.000 0.001 0.004 0.016 0.051 0.115 0.211 0.332 0.499 0.667 0.797 0.885 0.949 0.984 0.997 0.999 1.000 1.000 1.000"/></feComponentTransfer><feComposite in="b" in2="u" operator="arithmetic" k1="0" k2="1.03" k3="-1" k4="0.49" result="c"/><feComponentTransfer in="c" result="t"><feFuncA type="discrete" tableValues="0 1"/></feComponentTransfer><feFlood flood-color="#6496ff"/><feComposite in2="t" operator="in"/></filter><filter id="rf5" filterUnits="userSpaceOnUse" x="970" y="50" width="560" height="500" color-interpolation-filters="sRGB"><feTurbulence type="fractalNoise" baseFrequency="0.04" numOctaves="3" seed="36" result="w"/><feDisplacementMap in="SourceAlpha" in2="w" scale="34" xChannelSelector="R" yChannelSelector="G" result="sd"/><feGaussianBlur in="sd" stdDeviation="4" result="b"/><feTurbulence type="fractalNoise" baseFrequency="0.55" numOctaves="2" seed="38" result="n"/><feComponentTransfer in="n" result="u"><feFuncA type="table" tableValues="0.000 0.000 0.000 0.001 0.004 0.016 0.051 0.115 0.211 0.332 0.499 0.667 0.797 0.885 0.949 0.984 0.997 0.999 1.000 1.000 1.000"/></feComponentTransfer><feComposite in="b" in2="u" operator="arithmetic" k1="0" k2="1.03" k3="-1" k4="0.49" result="c"/><feComponentTransfer in="c" result="t"><feFuncA type="discrete" tableValues="0 1"/></feComponentTransfer><feFlood flood-color="#d2963c"/><feComposite in2="t" operator="in"/></filter><filter id="rf6" filterUnits="userSpaceOnUse" x="970" y="50" width="560" height="500" color-interpolation-filters="sRGB"><feTurbulence type="fractalNoise" baseFrequency="0.04" numOctaves="3" seed="41" result="w"/><feDisplacementMap in="SourceAlpha" in2="w" scale="34" xChannelSelector="R" yChannelSelector="G" result="sd"/><feGaussianBlur in="sd" stdDeviation="6" result="b"/><feTurbulence type="fractalNoise" baseFrequency="0.65" numOctaves="2" seed="45" result="n"/><feComponentTransfer in="n" result="u"><feFuncA type="table" tableValues="0.000 0.000 0.000 0.001 0.004 0.016 0.051 0.115 0.211 0.332 0.499 0.667 0.797 0.885 0.949 0.984 0.997 0.999 1.000 1.000 1.000"/></feComponentTransfer><feComposite in="b" in2="u" operator="arithmetic" k1="0" k2="1.03" k3="-1" k4="0.49" result="c"/><feComponentTransfer in="c" result="t"><feFuncA type="discrete" tableValues="0 1"/></feComponentTransfer><feFlood flood-color="#d2963c"/><feComposite in2="t" operator="in"/></filter><filter id="rf7" filterUnits="userSpaceOnUse" x="970" y="50" width="560" height="500" color-interpolation-filters="sRGB"><feTurbulence type="fractalNoise" baseFrequency="0.04" numOctaves="3" seed="46" result="w"/><feDisplacementMap in="SourceAlpha" in2="w" scale="34" xChannelSelector="R" yChannelSelector="G" result="sd"/><feGaussianBlur in="sd" stdDeviation="3.5" result="b"/><feTurbulence type="fractalNoise" baseFrequency="0.6" numOctaves="2" seed="52" result="n"/><feComponentTransfer in="n" result="u"><feFuncA type="table" tableValues="0.000 0.000 0.000 0.001 0.004 0.016 0.051 0.115 0.211 0.332 0.499 0.667 0.797 0.885 0.949 0.984 0.997 0.999 1.000 1.000 1.000"/></feComponentTransfer><feComposite in="b" in2="u" operator="arithmetic" k1="0" k2="1.03" k3="-1" k4="0.49" result="c"/><feComponentTransfer in="c" result="t"><feFuncA type="discrete" tableValues="0 1"/></feComponentTransfer><feFlood flood-color="#ff1428"/><feComposite in2="t" operator="in"/></filter><filter id="rf8" filterUnits="userSpaceOnUse" x="970" y="50" width="560" height="500" color-interpolation-filters="sRGB"><feTurbulence type="fractalNoise" baseFrequency="0.04" numOctaves="3" seed="51" result="w"/><feDisplacementMap in="SourceAlpha" in2="w" scale="34" xChannelSelector="R" yChannelSelector="G" result="sd"/><feGaussianBlur in="sd" stdDeviation="3.5" result="b"/><feTurbulence type="fractalNoise" baseFrequency="0.6" numOctaves="2" seed="59" result="n"/><feComponentTransfer in="n" result="u"><feFuncA type="table" tableValues="0.000 0.000 0.000 0.001 0.004 0.016 0.051 0.115 0.211 0.332 0.499 0.667 0.797 0.885 0.949 0.984 0.997 0.999 1.000 1.000 1.000"/></feComponentTransfer><feComposite in="b" in2="u" operator="arithmetic" k1="0" k2="1.03" k3="-1" k4="0.49" result="c"/><feComponentTransfer in="c" result="t"><feFuncA type="discrete" tableValues="0 1"/></feComponentTransfer><feFlood flood-color="#80ff20"/><feComposite in2="t" operator="in"/></filter><filter id="rf9" filterUnits="userSpaceOnUse" x="970" y="50" width="560" height="500" color-interpolation-filters="sRGB"><feTurbulence type="fractalNoise" baseFrequency="0.04" numOctaves="3" seed="56" result="w"/><feDisplacementMap in="SourceAlpha" in2="w" scale="34" xChannelSelector="R" yChannelSelector="G" result="sd"/><feGaussianBlur in="sd" stdDeviation="5" result="b"/><feTurbulence type="fractalNoise" baseFrequency="0.55" numOctaves="2" seed="66" result="n"/><feComponentTransfer in="n" result="u"><feFuncA type="table" tableValues="0.000 0.000 0.000 0.001 0.004 0.016 0.051 0.115 0.211 0.332 0.499 0.667 0.797 0.885 0.949 0.984 0.997 0.999 1.000 1.000 1.000"/></feComponentTransfer><feComposite in="b" in2="u" operator="arithmetic" k1="0" k2="1.03" k3="-1" k4="0.49" result="c"/><feComponentTransfer in="c" result="t"><feFuncA type="discrete" tableValues="0 1"/></feComponentTransfer><feFlood flood-color="#80ff20"/><feComposite in2="t" operator="in"/></filter><filter id="rf10" filterUnits="userSpaceOnUse" x="970" y="50" width="560" height="500" color-interpolation-filters="sRGB"><feTurbulence type="fractalNoise" baseFrequency="0.04" numOctaves="3" seed="61" result="w"/><feDisplacementMap in="SourceAlpha" in2="w" scale="34" xChannelSelector="R" yChannelSelector="G" result="sd"/><feGaussianBlur in="sd" stdDeviation="4" result="b"/><feTurbulence type="fractalNoise" baseFrequency="0.55" numOctaves="2" seed="73" result="n"/><feComponentTransfer in="n" result="u"><feFuncA type="table" tableValues="0.000 0.000 0.000 0.001 0.004 0.016 0.051 0.115 0.211 0.332 0.499 0.667 0.797 0.885 0.949 0.984 0.997 0.999 1.000 1.000 1.000"/></feComponentTransfer><feComposite in="b" in2="u" operator="arithmetic" k1="0" k2="1.03" k3="-1" k4="0.49" result="c"/><feComponentTransfer in="c" result="t"><feFuncA type="discrete" tableValues="0 1"/></feComponentTransfer><feFlood flood-color="#00ff00"/><feComposite in2="t" operator="in"/></filter><filter id="rf11" filterUnits="userSpaceOnUse" x="970" y="50" width="560" height="500" color-interpolation-filters="sRGB"><feTurbulence type="fractalNoise" baseFrequency="0.04" numOctaves="3" seed="66" result="w"/><feDisplacementMap in="SourceAlpha" in2="w" scale="34" xChannelSelector="R" yChannelSelector="G" result="sd"/><feGaussianBlur in="sd" stdDeviation="5" result="b"/><feTurbulence type="fractalNoise" baseFrequency="0.6" numOctaves="2" seed="80" result="n"/><feComponentTransfer in="n" result="u"><feFuncA type="table" tableValues="0.000 0.000 0.000 0.001 0.004 0.016 0.051 0.115 0.211 0.332 0.499 0.667 0.797 0.885 0.949 0.984 0.997 0.999 1.000 1.000 1.000"/></feComponentTransfer><feComposite in="b" in2="u" operator="arithmetic" k1="0" k2="1.03" k3="-1" k4="0.49" result="c"/><feComponentTransfer in="c" result="t"><feFuncA type="discrete" tableValues="0 1"/></feComponentTransfer><feFlood flood-color="#1eaaff"/><feComposite in2="t" operator="in"/></filter><filter id="rf12" filterUnits="userSpaceOnUse" x="970" y="50" width="560" height="500" color-interpolation-filters="sRGB"><feTurbulence type="fractalNoise" baseFrequency="0.04" numOctaves="3" seed="71" result="w"/><feDisplacementMap in="SourceAlpha" in2="w" scale="34" xChannelSelector="R" yChannelSelector="G" result="sd"/><feGaussianBlur in="sd" stdDeviation="7" result="b"/><feTurbulence type="fractalNoise" baseFrequency="0.65" numOctaves="2" seed="87" result="n"/><feComponentTransfer in="n" result="u"><feFuncA type="table" tableValues="0.000 0.000 0.000 0.001 0.004 0.016 0.051 0.115 0.211 0.332 0.499 0.667 0.797 0.885 0.949 0.984 0.997 0.999 1.000 1.000 1.000"/></feComponentTransfer><feComposite in="b" in2="u" operator="arithmetic" k1="0" k2="1.03" k3="-1" k4="0.49" result="c"/><feComponentTransfer in="c" result="t"><feFuncA type="discrete" tableValues="0 1"/></feComponentTransfer><feFlood flood-color="#c81e8c"/><feComposite in2="t" operator="in"/></filter><filter id="rf13" filterUnits="userSpaceOnUse" x="970" y="50" width="560" height="500" color-interpolation-filters="sRGB"><feTurbulence type="fractalNoise" baseFrequency="0.04" numOctaves="3" seed="76" result="w"/><feDisplacementMap in="SourceAlpha" in2="w" scale="34" xChannelSelector="R" yChannelSelector="G" result="sd"/><feGaussianBlur in="sd" stdDeviation="5" result="b"/><feTurbulence type="fractalNoise" baseFrequency="0.55" numOctaves="2" seed="94" result="n"/><feComponentTransfer in="n" result="u"><feFuncA type="table" tableValues="0.000 0.000 0.000 0.001 0.004 0.016 0.051 0.115 0.211 0.332 0.499 0.667 0.797 0.885 0.949 0.984 0.997 0.999 1.000 1.000 1.000"/></feComponentTransfer><feComposite in="b" in2="u" operator="arithmetic" k1="0" k2="1.03" k3="-1" k4="0.49" result="c"/><feComponentTransfer in="c" result="t"><feFuncA type="discrete" tableValues="0 1"/></feComponentTransfer><feFlood flood-color="#00ff00"/><feComposite in2="t" operator="in"/></filter><filter id="rf14" filterUnits="userSpaceOnUse" x="970" y="50" width="560" height="500" color-interpolation-filters="sRGB"><feTurbulence type="fractalNoise" baseFrequency="0.04" numOctaves="3" seed="81" result="w"/><feDisplacementMap in="SourceAlpha" in2="w" scale="34" xChannelSelector="R" yChannelSelector="G" result="sd"/><feGaussianBlur in="sd" stdDeviation="9" result="b"/><feTurbulence type="fractalNoise" baseFrequency="0.65" numOctaves="2" seed="101" result="n"/><feComponentTransfer in="n" result="u"><feFuncA type="table" tableValues="0.000 0.000 0.000 0.001 0.004 0.016 0.051 0.115 0.211 0.332 0.499 0.667 0.797 0.885 0.949 0.984 0.997 0.999 1.000 1.000 1.000"/></feComponentTransfer><feComposite in="b" in2="u" operator="arithmetic" k1="0" k2="1.03" k3="-1" k4="0.49" result="c"/><feComponentTransfer in="c" result="t"><feFuncA type="discrete" tableValues="0 1"/></feComponentTransfer><feFlood flood-color="#00ff00"/><feComposite in2="t" operator="in"/></filter><filter id="rf15" filterUnits="userSpaceOnUse" x="970" y="50" width="560" height="500" color-interpolation-filters="sRGB"><feTurbulence type="fractalNoise" baseFrequency="0.04" numOctaves="3" seed="86" result="w"/><feDisplacementMap in="SourceAlpha" in2="w" scale="34" xChannelSelector="R" yChannelSelector="G" result="sd"/><feGaussianBlur in="sd" stdDeviation="4" result="b"/><feTurbulence type="fractalNoise" baseFrequency="0.6" numOctaves="2" seed="108" result="n"/><feComponentTransfer in="n" result="u"><feFuncA type="table" tableValues="0.000 0.000 0.000 0.001 0.004 0.016 0.051 0.115 0.211 0.332 0.499 0.667 0.797 0.885 0.949 0.984 0.997 0.999 1.000 1.000 1.000"/></feComponentTransfer><feComposite in="b" in2="u" operator="arithmetic" k1="0" k2="1.03" k3="-1" k4="0.49" result="c"/><feComponentTransfer in="c" result="t"><feFuncA type="discrete" tableValues="0 1"/></feComponentTransfer><feFlood flood-color="#ff1428"/><feComposite in2="t" operator="in"/></filter><filter id="rf16" filterUnits="userSpaceOnUse" x="970" y="50" width="560" height="500" color-interpolation-filters="sRGB"><feTurbulence type="fractalNoise" baseFrequency="0.04" numOctaves="3" seed="91" result="w"/><feDisplacementMap in="SourceAlpha" in2="w" scale="34" xChannelSelector="R" yChannelSelector="G" result="sd"/><feGaussianBlur in="sd" stdDeviation="4" result="b"/><feTurbulence type="fractalNoise" baseFrequency="0.55" numOctaves="2" seed="115" result="n"/><feComponentTransfer in="n" result="u"><feFuncA type="table" tableValues="0.000 0.000 0.000 0.001 0.004 0.016 0.051 0.115 0.211 0.332 0.499 0.667 0.797 0.885 0.949 0.984 0.997 0.999 1.000 1.000 1.000"/></feComponentTransfer><feComposite in="b" in2="u" operator="arithmetic" k1="0" k2="1.03" k3="-1" k4="0.49" result="c"/><feComponentTransfer in="c" result="t"><feFuncA type="discrete" tableValues="0 1"/></feComponentTransfer><feFlood flood-color="#000000"/><feComposite in2="t" operator="in"/></filter><filter id="rf17" filterUnits="userSpaceOnUse" x="970" y="50" width="560" height="500" color-interpolation-filters="sRGB"><feTurbulence type="fractalNoise" baseFrequency="0.04" numOctaves="3" seed="96" result="w"/><feDisplacementMap in="SourceAlpha" in2="w" scale="34" xChannelSelector="R" yChannelSelector="G" result="sd"/><feGaussianBlur in="sd" stdDeviation="5" result="b"/><feTurbulence type="fractalNoise" baseFrequency="0.7" numOctaves="2" seed="122" result="n"/><feComponentTransfer in="n" result="u"><feFuncA type="table" tableValues="0.000 0.000 0.000 0.001 0.004 0.016 0.051 0.115 0.211 0.332 0.499 0.667 0.797 0.885 0.949 0.984 0.997 0.999 1.000 1.000 1.000"/></feComponentTransfer><feComposite in="b" in2="u" operator="arithmetic" k1="0" k2="1.03" k3="-1" k4="0.49" result="c"/><feComponentTransfer in="c" result="t"><feFuncA type="discrete" tableValues="0 1"/></feComponentTransfer><feFlood flood-color="#000000"/><feComposite in2="t" operator="in"/></filter></defs><g clip-path="url(#hx)"><g filter="url(#rf0)"><polygon points="1192,198 1262,203 1300,208 1318,232 1316,332 1290,342 1265,348 1262,368 1240,362 1200,335 1160,322 1150,302 1152,270 1170,232" fill-opacity="1.0"/></g><g filter="url(#rf1)"><polygon points="1000,297 1100,118 1140,135 1152,150 1160,170 1172,182 1200,197 1200,215 1175,245 1160,290 1120,300 1085,292 1050,275" fill-opacity="0.38"/><polygon points="1030,290 1050,258 1075,215 1095,185 1110,195 1105,225 1100,250 1085,272 1060,274" fill-opacity="0.8"/></g><g filter="url(#rf2)"><polygon points="1160,195 1205,200 1190,240 1172,280 1152,300 1140,290 1150,250" fill-opacity="0.3"/></g><g filter="url(#rf3)"><polygon points="1000,300 1045,268 1080,282 1105,298 1130,316 1137,360 1134,392 1116,410 1075,438" fill-opacity="0.55"/><polygon points="1040,330 1075,312 1105,320 1126,342 1130,385 1113,406 1080,428 1030,330" fill-opacity="0.88"/></g><g filter="url(#rf4)"><polygon points="1316,208 1345,196 1374,205 1380,235 1397,262 1407,300 1420,322 1402,342 1370,352 1328,352 1314,335" fill-opacity="0.7"/><polygon points="1318,274 1345,264 1375,270 1392,290 1405,312 1400,338 1370,352 1330,352 1316,335" fill-opacity="0.92"/></g><g filter="url(#rf5)"><polygon points="1385,90 1470,240 1430,250 1415,250 1395,238 1372,215 1352,190 1334,163" fill-opacity="0.55"/><polygon points="1352,180 1385,165 1415,175 1450,228 1420,238 1400,232 1375,210" fill-opacity="0.8"/></g><g filter="url(#rf6)"><polygon points="1389,236 1420,245 1440,255 1432,285 1400,280 1385,255" fill-opacity="0.25"/><ellipse cx="1205" cy="487" rx="16" ry="4" fill-opacity="0.6"/></g><g filter="url(#rf7)"><polygon points="1132,70 1264,70 1264,150 1266,170 1266,196 1250,204 1230,204 1200,195 1177,181 1166,178 1156,160 1149,135 1143,115" fill-opacity="1.0"/></g><g filter="url(#rf8)"><polygon points="1250,70 1385,70 1395,110 1338,162 1320,168 1290,165 1268,168 1257,150" fill-opacity="1.0"/></g><g filter="url(#rf9)"><ellipse cx="1158" cy="120" rx="20" ry="19" fill-opacity="0.62"/><ellipse cx="1130" cy="142" rx="6" ry="5" fill-opacity="0.6"/></g><g filter="url(#rf10)"><polygon points="1510,297 1470,240 1440,265 1430,292 1420,302 1418,322 1403,338 1386,352 1395,364 1425,370 1465,382" fill-opacity="0.7"/><polygon points="1510,297 1447,290 1425,300 1420,322 1405,338 1390,352 1397,364 1425,370 1465,382" fill-opacity="0.9"/></g><g filter="url(#rf11)"><polygon points="1312,346 1390,350 1425,368 1465,375 1385,525 1278,525 1288,465 1300,440 1292,410 1296,376" fill-opacity="0.97"/></g><g filter="url(#rf12)"><ellipse cx="1336" cy="395" rx="21" ry="40" fill-opacity="0.62"/></g><g filter="url(#rf13)"><polygon points="1165,310 1200,326 1240,350 1262,368 1292,374 1292,410 1300,440 1288,465 1283,525 1253,525 1250,470 1200,468 1180,475 1174,525 1165,470 1160,445 1150,425 1140,410 1127,400 1127,365 1138,340 1148,322" fill-opacity="0.84"/><polygon points="1150,400 1180,385 1215,385 1235,400 1238,440 1220,462 1185,464 1160,445" fill-opacity="0.9"/></g><g filter="url(#rf14)"><polygon points="1150,298 1180,290 1230,308 1270,325 1290,345 1262,368 1200,335" fill-opacity="0.35"/><polygon points="1290,352 1338,348 1338,425 1300,445 1286,400" fill-opacity="0.32"/></g><g filter="url(#rf15)"><polygon points="1070,430 1126,403 1140,410 1150,425 1160,445 1165,470 1176,525 1115,525" fill-opacity="0.68"/></g><g filter="url(#rf16)"><polygon points="1265,173 1300,169 1335,166 1350,190 1335,201 1315,206 1300,211 1268,206" fill-opacity="0.95"/><polygon points="1258,205 1313,208 1313,268 1295,262 1275,250 1258,235" fill-opacity="0.4"/><polygon points="1294,232 1314,232 1317,335 1296,340" fill-opacity="0.4"/><polygon points="1285,140 1345,138 1340,162 1285,166" fill-opacity="0.3"/><polygon points="1035,282 1050,262 1080,272 1112,286 1102,298 1070,290 1045,286" fill-opacity="0.5"/><polygon points="1095,290 1120,283 1148,295 1150,315 1140,330 1137,350 1128,355 1125,330 1118,310 1100,300" fill-opacity="0.95"/><polygon points="1268,354 1292,341 1318,328 1332,332 1325,344 1300,354 1278,366 1264,366" fill-opacity="0.9"/><polygon points="1250,364 1300,358 1298,392 1250,395" fill-opacity="0.3"/><ellipse cx="1266" cy="392" rx="15" ry="8" fill-opacity="0.9"/><polygon points="1178,520 1182,474 1200,468 1250,470 1255,520" fill-opacity="0.95"/><ellipse cx="1366" cy="253" rx="9" ry="8" fill-opacity="0.8"/><ellipse cx="1403" cy="283" rx="20" ry="15" fill-opacity="0.85"/><ellipse cx="1412" cy="324" rx="11" ry="7" fill-opacity="0.85"/><polygon points="1240,400 1300,400 1295,450 1250,450" fill-opacity="0.2"/><polygon points="1095,75 1158,75 1152,100 1133,126 1127,140 1108,142" fill-opacity="0.92"/><polygon points="1177,362 1240,362 1235,385 1200,380 1177,392" fill-opacity="0.15"/><polygon points="1165,335 1215,338 1215,385 1168,388" fill-opacity="0.18"/><ellipse cx="1381" cy="221" rx="13" ry="10" fill-opacity="0.4"/><polygon points="1258,205 1290,206 1292,250 1275,250 1258,235" fill-opacity="0.3"/></g><g filter="url(#rf17)"><ellipse cx="1368" cy="394" rx="18" ry="21" fill-opacity="0.55"/></g></g><polygon points="1139,102 1366,102 1477,297 1366,492 1139,492 1027,297" fill="none" stroke="#f00" stroke-width="1.4"/><g clip-path="url(#hx)"><path transform="translate(1368.3 338.5)" d="M-2.8,-6 H2.8 V-2.2 H6.2 V2.2 H2.8 V6 H-2.8 V2.2 H-6.2 V-2.2 H-2.8 Z" fill="none" stroke="#f00" stroke-width="2.7" stroke-linejoin="round"/><rect x="1368.0" y="333.1" width="1.6" height="10.2" fill="#0f0"/><path transform="translate(1330.5 472.5)" d="M-2.8,-6 H2.8 V-2.2 H6.2 V2.2 H2.8 V6 H-2.8 V2.2 H-6.2 V-2.2 H-2.8 Z" fill="none" stroke="#f00" stroke-width="2.7" stroke-linejoin="round"/><rect x="1329.9" y="467.1" width="2.2" height="10.2" fill="#0f0"/><path transform="translate(1216 438.5)" d="M-2.8,-6 H2.8 V-2.2 H6.2 V2.2 H2.8 V6 H-2.8 V2.2 H-6.2 V-2.2 H-2.8 Z" fill="none" stroke="#f00" stroke-width="2.7" stroke-linejoin="round"/><rect x="1214.0" y="433.1" width="5" height="10.2" fill="#0f0"/><path transform="translate(1255.6 303)" d="M-2.8,-6 H2.8 V-2.2 H6.2 V2.2 H2.8 V6 H-2.8 V2.2 H-6.2 V-2.2 H-2.8 Z" fill="none" stroke="#f00" stroke-width="2.7" stroke-linejoin="round"/><rect x="1255.1" y="297.6" width="2" height="10.2" fill="#0f0"/><path transform="translate(1410.4 201)" d="M-2.8,-6 H2.8 V-2.2 H6.2 V2.2 H2.8 V6 H-2.8 V2.2 H-6.2 V-2.2 H-2.8 Z" fill="none" stroke="#f00" stroke-width="2.7" stroke-linejoin="round"/><rect x="1409.8" y="195.6" width="2.2" height="10.2" fill="#0f0"/><circle cx="1252" cy="296.7" r="2.6" fill="#ffee00"/><path d="M1334.5 457 l4 -1.6 M1336 453.5 l1.2 4.4" stroke="#f00" stroke-width="0.9" fill="none"/><rect x="1313" y="102" width="5" height="5" fill="#f00"/><ellipse cx="1156" cy="138.3" rx="4.6" ry="5.6" fill="#f00"/><rect x="1157.3" y="133" width="1.5" height="9" fill="#0f0"/><ellipse cx="1205.8" cy="134.8" rx="4.6" ry="5" fill="#f00"/><rect x="1206.4" y="131" width="1.4" height="7.5" fill="#0f0"/><g font-family="Liberation Sans,sans-serif" font-size="16" fill="#dedede" stroke="#000" stroke-width="2.4" paint-order="stroke" stroke-linejoin="round" word-spacing="-1"><text x="1332.6" y="486.0">1</text><text x="1332" y="503.5">0. 3200</text><text x="1158.7" y="151.7">50</text><text x="1158.7" y="168.5">0. 3350</text><text x="1207.2" y="148.8">31</text><text x="1207.2" y="166.7" clip-path="url(#c31)">0. 2240</text><text x="1060.2" y="253.3">6</text><text x="1060.2" y="270.8">0. 0230</text><text x="1318.0" y="114.5">10</text><text x="1316.2" y="130.5">0. 3550</text><text x="1411.2" y="215.0">22</text><text x="1411.2" y="231.5">0. 2760</text><text x="1256.6" y="317.1">39</text><text x="1256.6" y="335.0">0. 2770</text><text x="1370.2" y="351.7">17</text><text x="1369.0" y="369.2">0. 2430</text><text x="1217.2" y="452.2">24</text><text x="1217.2" y="469.5">0. 3070</text><text x="1337.7" y="469.5">28</text><text x="1339.2" y="486.5">0. 0340</text></g></g><rect x="1611.9" y="90.0" width="3.1" height="19" fill="#0f0"/><path d="M1610.9 90.0 h5.1 v-3 l-2.5 -2.8 l-2.6 2.8 z" fill="#0f0"/><rect x="1617.0" y="110.2" width="22.5" height="2.9" fill="#f00"/><path d="M1635.5 109.6 l4.2 1.2 v1.8 l-4.2 1.2 z" fill="#f00"/><text x="1611.5" y="108.4" font-family="Liberation Serif,serif" font-size="14" fill="#0050d0">z</text><rect x="1610.0" y="108.4" width="8" height="5.8" fill="#00f"/><text x="1610.6" y="77.4" font-family="Liberation Serif,serif" font-size="15" fill="#00a800">y</text><text x="1640.6" y="111.0" font-family="Liberation Serif,serif" font-size="15" fill="#c80000">x</text></svg>
</body></html>
